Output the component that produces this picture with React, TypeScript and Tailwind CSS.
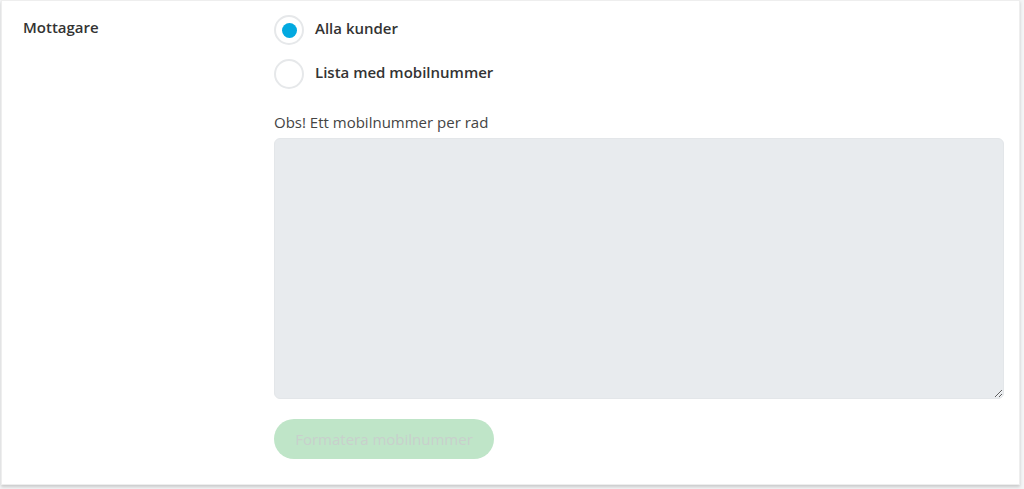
export default function App() {
  return (
    <div className="h-[489px] w-[1024px] bg-[#f4f5f6] font-['Open_Sans',sans-serif] text-[#333]">
      <div className="ml-px h-[485px] w-[1019px] border border-[#eeeeee] bg-white shadow-[0_2px_3px_rgba(0,0,0,0.18)]">
        <div className="flex pt-[14px]">
          {/* Label column */}
          <div className="w-[272px] shrink-0 pl-[21px]">
            <span className="text-[15px] font-semibold text-[#333]">Mottagare</span>
          </div>

          {/* Field column */}
          <div className="flex w-[730px] flex-col">
            <label className="flex h-[30px] items-start gap-[11px]">
              <span className="flex h-[30px] w-[30px] items-center justify-center rounded-full border-2 border-[#e6e8ea] bg-white">
                <span className="h-[15px] w-[15px] rounded-full bg-[#03a9e0]" />
              </span>
              <span className="pt-[3px] text-[15px] font-semibold leading-[20px]">Alla kunder</span>
            </label>
            <label className="mt-[14px] flex h-[30px] items-start gap-[11px]">
              <span className="h-[30px] w-[30px] rounded-full border-2 border-[#e6e8ea] bg-white" />
              <span className="pt-[3px] text-[15px] font-semibold leading-[20px]">Lista med mobilnummer</span>
            </label>

            <p className="mt-[23px] text-[15px] leading-[20px] text-[#444]">Obs! Ett mobilnummer per rad</p>

            <textarea className="mt-[6px] h-[261px] w-[730px] resize-y rounded-[6px] border border-[#e3e6e9] bg-[#e8ebee] outline-none" />

            <button
              disabled
              className="mt-[20px] h-[40px] w-[220px] rounded-full bg-[#bfe5c8] text-[15px] text-[#c8d0cc]"
            >
              Formatera mobilnummer
            </button>
          </div>
        </div>
      </div>
    </div>
  );
}
